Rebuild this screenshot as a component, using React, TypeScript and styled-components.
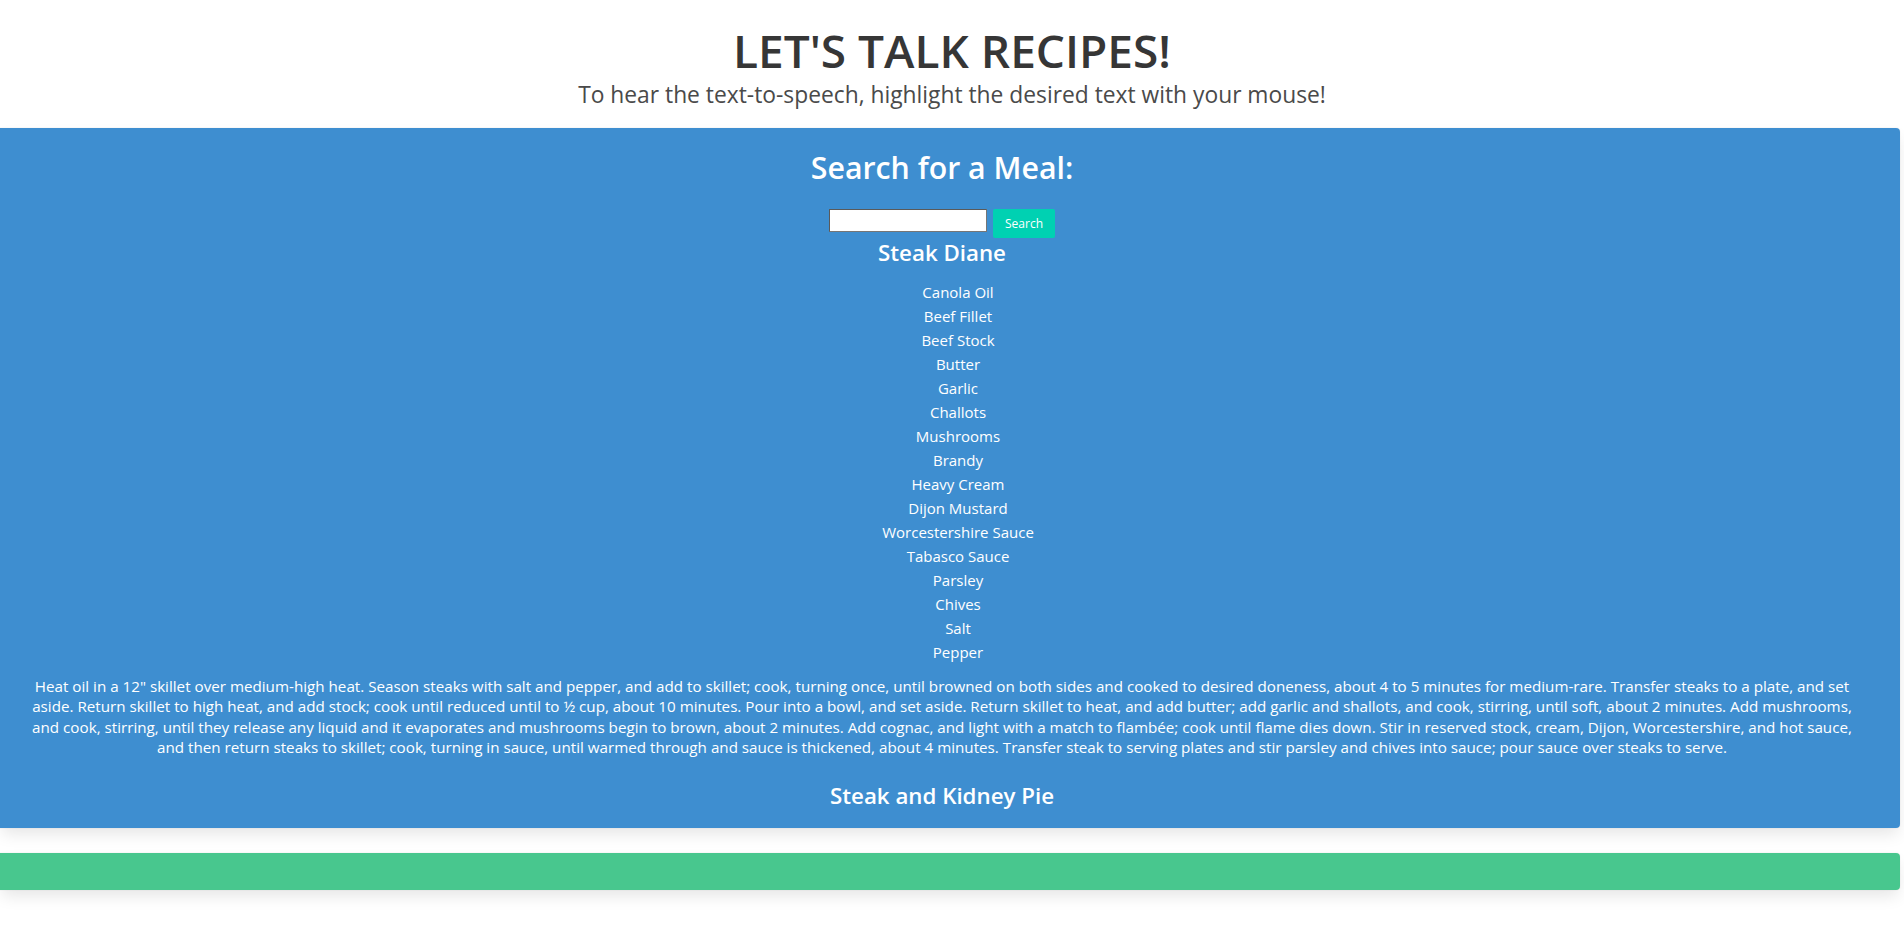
import React from 'react'
import styled, { createGlobalStyle } from 'styled-components'

const ingredients = [
  'Canola Oil',
  'Beef Fillet',
  'Beef Stock',
  'Butter',
  'Garlic',
  'Challots',
  'Mushrooms',
  'Brandy',
  'Heavy Cream',
  'Dijon Mustard',
  'Worcestershire Sauce',
  'Tabasco Sauce',
  'Parsley',
  'Chives',
  'Salt',
  'Pepper',
]

const instructions =
  'Heat oil in a 12" skillet over medium-high heat. Season steaks with salt and pepper, and add to skillet; cook, turning once, until browned on both sides and cooked to desired doneness, about 4 to 5 minutes for medium-rare. Transfer steaks to a plate, and set aside. Return skillet to high heat, and add stock; cook until reduced until to ½ cup, about 10 minutes. Pour into a bowl, and set aside. Return skillet to heat, and add butter; add garlic and shallots, and cook, stirring, until soft, about 2 minutes. Add mushrooms, and cook, stirring, until they release any liquid and it evaporates and mushrooms begin to brown, about 2 minutes. Add cognac, and light with a match to flambée; cook until flame dies down. Stir in reserved stock, cream, Dijon, Worcestershire, and hot sauce, and then return steaks to skillet; cook, turning in sauce, until warmed through and sauce is thickened, about 4 minutes. Transfer steak to serving plates and stir parsley and chives into sauce; pour sauce over steaks to serve.'

const GlobalStyle = createGlobalStyle`
  html, body {
    margin: 0;
    padding: 0;
    background: #fff;
  }
  body {
    font-family: "Open Sans", "Noto Sans", sans-serif;
    color: #4a4a4a;
  }
`

const App: React.FC = function () {
  return (
    <Page>
      <GlobalStyle />
      <Header>
        <Title>LET'S TALK RECIPES!</Title>
        <Subtitle>To hear the text-to-speech, highlight the desired text with your mouse!</Subtitle>
      </Header>
      <Notification color="#3e8ed0">
        <SearchTitle>Search for a Meal:</SearchTitle>
        <SearchRow>
          <SearchInput type="text" />
          <SearchButton>Search</SearchButton>
        </SearchRow>
        <MealName>Steak Diane</MealName>
        <IngredientList>
          {ingredients.map((item) => (
            <Ingredient key={item}>{item}</Ingredient>
          ))}
        </IngredientList>
        <Instructions>{instructions}</Instructions>
        <NextMeal>Steak and Kidney Pie</NextMeal>
      </Notification>
      <Notification color="#48c78e" />
    </Page>
  )
}

const Page = styled.div`
  width: 100%;
  padding-bottom: 30px;
`

const Header = styled.header`
  display: flex;
  flex-direction: column;
  align-items: center;
  padding-top: 25px;
  height: 128px;
  box-sizing: border-box;
`

const Title = styled.h1`
  margin: 0;
  font-size: 46px;
  line-height: 1.125;
  font-weight: 600;
  color: #363636;
`

const Subtitle = styled.h2`
  margin: 4px 0 0;
  font-size: 22.8px;
  line-height: 1.25;
  font-weight: 400;
  color: #4a4a4a;
`

const Notification = styled.section<{ color: string }>`
  box-sizing: border-box;
  width: calc(100% - 4px);
  margin-bottom: 25px;
  padding: 20px 40px 17px 24px;
  background-color: ${(p) => p.color};
  border-radius: 0 4px 4px 0;
  box-shadow: 0 8px 16px -2px rgba(10, 10, 10, 0.1), 0 0 0 1px rgba(10, 10, 10, 0.02);
  color: #fff;
  text-align: center;
`

const SearchTitle = styled.h2`
  margin: 3px 0 24px;
  font-size: 30.3px;
  line-height: 1.125;
  font-weight: 600;
  color: #fff;
`

const SearchRow = styled.div`
  display: flex;
  justify-content: center;
  align-items: flex-start;
  gap: 6px;
`

const SearchInput = styled.input`
  box-sizing: border-box;
  width: 158px;
  height: 23px;
  margin: 0;
  border: 1px solid #767676;
  border-top-color: #5a5a5a;
  border-left-color: #5a5a5a;
  background: #fff;
  padding: 1px 2px;
`

const SearchButton = styled.button`
  box-sizing: border-box;
  height: 29px;
  padding: 0 12px;
  border: none;
  border-radius: 2px;
  background-color: #00d1b2;
  color: #fff;
  font-family: inherit;
  font-size: 12px;
  cursor: pointer;
`

const MealName = styled.h3`
  margin: 0;
  font-size: 22.3px;
  line-height: 30px;
  font-weight: 600;
  color: #fff;
`

const IngredientList = styled.ul`
  list-style: none;
  margin: 12px 0 0;
  padding: 0 0 0 32px;
`

const Ingredient = styled.li`
  font-size: 15px;
  line-height: 24px;
  color: #fff;
`

const Instructions = styled.p`
  margin: 12px 0 0;
  font-size: 15.2px;
  line-height: 20.3px;
  color: #fff;
`

const NextMeal = styled.h3`
  margin: 24px 0 0;
  font-size: 22.3px;
  line-height: 30px;
  font-weight: 600;
  color: #fff;
`

export default App
